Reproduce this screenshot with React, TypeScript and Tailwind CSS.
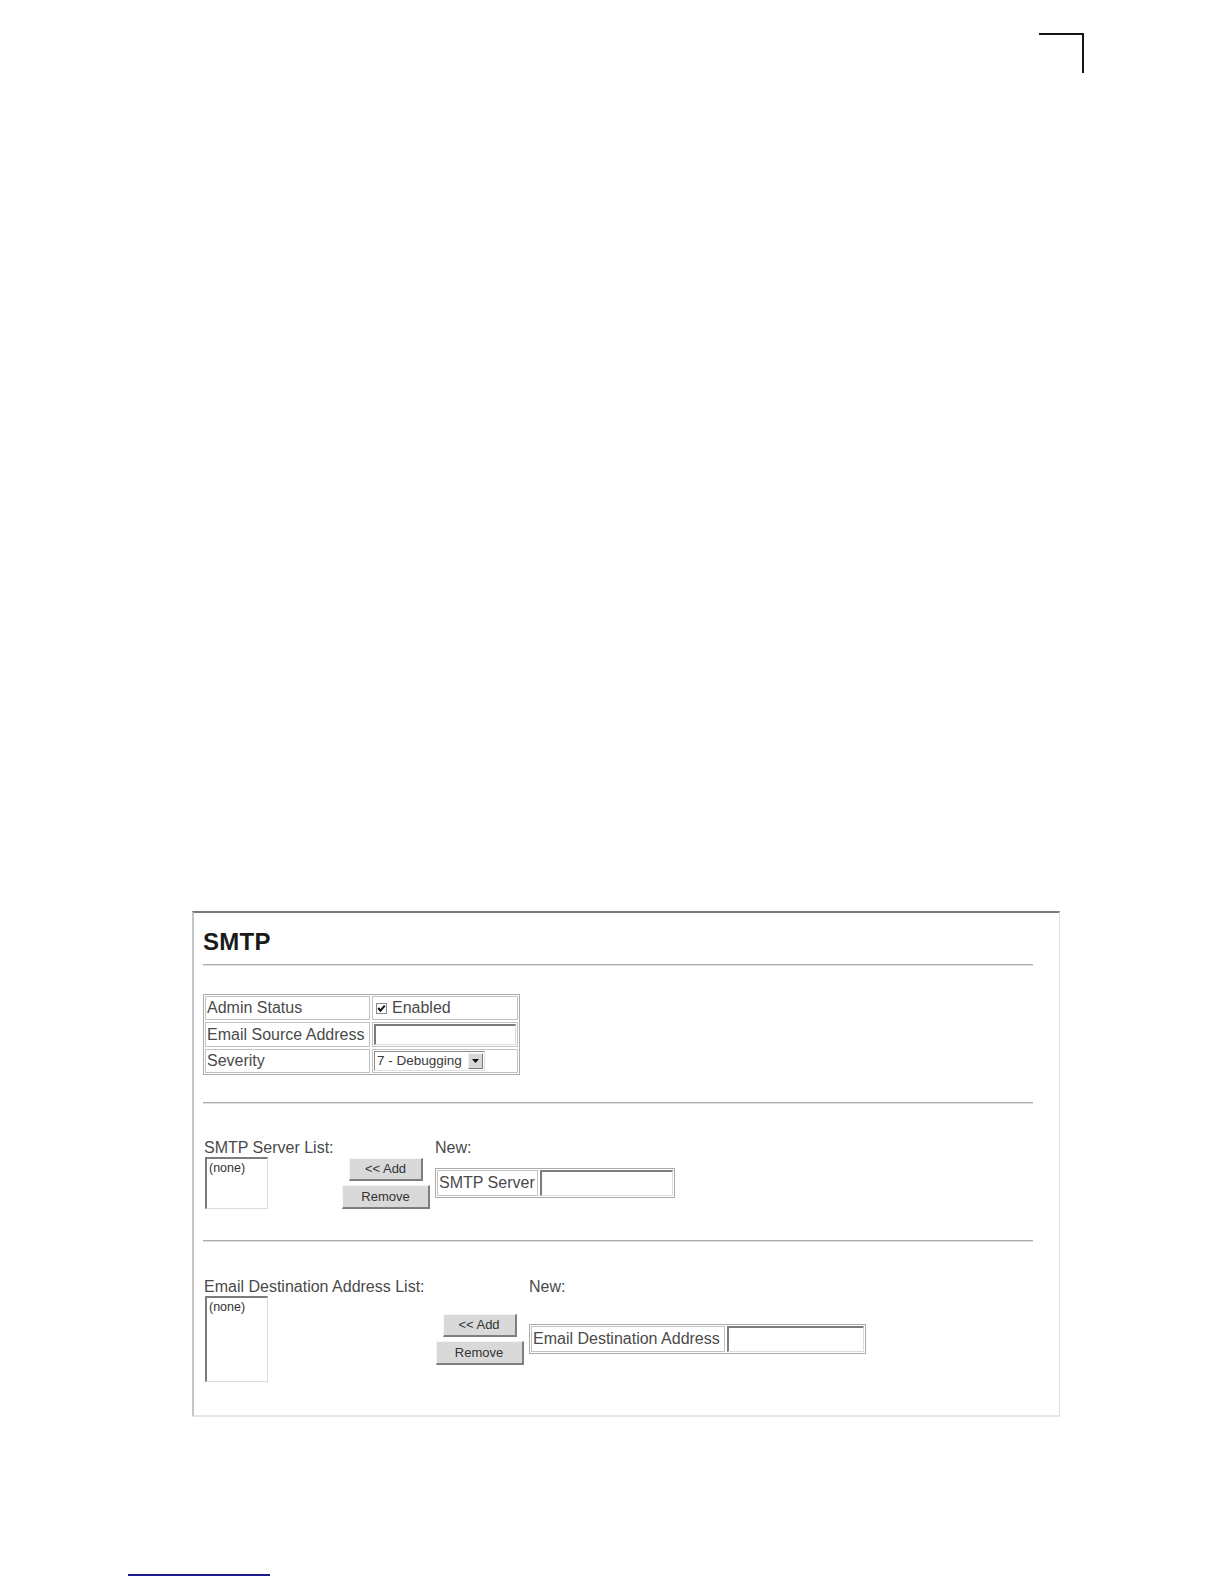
import type { ReactNode } from "react";

const inset =
  "border-t-2 border-l-2 border-t-[#7c7c7c] border-l-[#7c7c7c] border-b border-r border-b-[#dcdcdc] border-r-[#dcdcdc] bg-white";

function Rule() {
  return <div className="h-[2px] border-t border-t-[#a9a9a9] border-b border-b-[#e2e2e2]" />;
}

function Btn({ children, className }: { children: ReactNode; className: string }) {
  return (
    <button
      type="button"
      className={`flex items-center justify-center bg-[#d9d9d9] border-t border-l border-t-[#f5f5f5] border-l-[#f5f5f5] border-b-2 border-r-2 border-b-[#7e7e7e] border-r-[#7e7e7e] text-[13px] leading-none text-[#333] ${className}`}
    >
      {children}
    </button>
  );
}

function ListBox({ height }: { height: string }) {
  return (
    <div className={`ml-[2px] w-[63px] ${height} ${inset} px-[2px] pt-[2px] text-[12.5px] leading-[14px] text-[#333]`}>
      (none)
    </div>
  );
}

function NewField({ label, labelW, inputW }: { label: string; labelW: string; inputW: string }) {
  return (
    <div className="flex h-[30px] gap-[2px] border border-[#ababab] p-[1px]">
      <div className={`${labelW} flex items-center whitespace-nowrap border border-[#c2c2c2] pl-[1px] text-[16px] text-[#4a4a4a]`}>
        {label}
      </div>
      <div className={`${inputW} ${inset}`} />
    </div>
  );
}

function ListSection({
  title,
  cols,
  boxH,
  field,
}: {
  title: string;
  cols: string;
  boxH: string;
  field: ReactNode;
}) {
  return (
    <div className={`grid ${cols} grid-rows-[18px_auto] text-[16px] leading-[18px] text-[#4a4a4a]`}>
      <div className="whitespace-nowrap pl-[1px]">{title}</div>
      <div />
      <div>New:</div>
      <ListBox height={boxH} />
      <div className="flex flex-col items-center justify-center gap-[4px]">
        <Btn className="w-[74px] h-[23px]">&lt;&lt; Add</Btn>
        <Btn className="w-[88px] h-[24px]">Remove</Btn>
      </div>
      <div className="flex items-center">{field}</div>
    </div>
  );
}

export default function App() {
  return (
    <div className="w-[1224px] h-[1584px] overflow-hidden bg-white font-['Liberation_Sans',Arial,sans-serif]">
      {/* crop mark */}
      <div className="pt-[33px] pl-[1039px]">
        <div className="w-[45px] h-[40px] border-t-2 border-r-2 border-[#151515]" />
      </div>

      <section className="ml-[192px] mt-[838px] w-[868px] h-[506px] border-t-2 border-t-[#7a7a7a] border-l-2 border-l-[#c6c6c6] border-r border-r-[#e2e2e2] border-b-2 border-b-[#e6e6e6] pl-[9px] pr-[26px]">
        <h2 className="pt-[15px] text-[24px] leading-[28px] font-bold tracking-[0.3px] text-[#1a1a1a]">SMTP</h2>
        <div className="mt-[8px]">
          <Rule />
        </div>

        {/* settings table */}
        <div className="mt-[28px] w-[317px] border border-[#ababab] p-[1px] text-[16px] text-[#4a4a4a]">
          <div className="grid grid-cols-[165px_146px] grid-rows-[24px_25px_24px] gap-[2px]">
            <div className="flex items-center border border-[#c2c2c2] pl-[1px]">Admin Status</div>
            <div className="flex items-center gap-[5px] border border-[#c2c2c2] pl-[3px]">
              <svg width="11" height="11" viewBox="0 0 11 11" className="shrink-0">
                <rect x="0.5" y="0.5" width="10" height="10" fill="#fff" stroke="#8a8a8a" />
                <path d="M2.2 5 L4.4 7.6 L8.8 2.6" fill="none" stroke="#111" strokeWidth="2" />
              </svg>
              <span>Enabled</span>
            </div>
            <div className="flex items-center whitespace-nowrap border border-[#c2c2c2] pl-[1px]">Email Source Address</div>
            <div className="flex items-center border border-[#c2c2c2] p-px">
              <div className={`h-[21px] w-full ${inset}`} />
            </div>
            <div className="flex items-center border border-[#c2c2c2] pl-[1px]">Severity</div>
            <div className="flex items-center border border-[#c2c2c2] pl-px">
              <div className="flex h-[20px] w-[111px] items-center border-t border-l border-t-[#8a8a8a] border-l-[#8a8a8a] border-b border-r border-b-[#e0e0e0] border-r-[#e0e0e0] bg-white pl-[2px] pr-[1px]">
                <span className="flex-1 text-[13.5px] leading-none text-[#3a3a3a]">7 - Debugging</span>
                <span className="flex h-[16px] w-[15px] items-center justify-center bg-[#d6d6d6] border-t border-l border-t-[#f2f2f2] border-l-[#f2f2f2] border-b border-r border-b-[#7a7a7a] border-r-[#7a7a7a]">
                  <svg width="7" height="4" viewBox="0 0 7 4">
                    <path d="M0 0 H7 L3.5 4 Z" fill="#111" />
                  </svg>
                </span>
              </div>
            </div>
          </div>
        </div>

        <div className="mt-[27px]">
          <Rule />
        </div>

        <div className="mt-[35px]">
          <ListSection
            title="SMTP Server List:"
            cols="grid-cols-[134px_98px_auto]"
            boxH="h-[52px]"
            field={<NewField label="SMTP Server" labelW="w-[101px]" inputW="w-[133px]" />}
          />
        </div>

        <div className="mt-[31px]">
          <Rule />
        </div>

        <div className="mt-[36px]">
          <ListSection
            title="Email Destination Address List:"
            cols="grid-cols-[227px_99px_auto]"
            boxH="h-[86px]"
            field={<NewField label="Email Destination Address" labelW="w-[194px]" inputW="w-[137px]" />}
          />
        </div>
      </section>

      <div className="ml-[128px] mt-[157px] w-[142px] h-[2px] bg-[#1c1c8f]" />
    </div>
  );
}
